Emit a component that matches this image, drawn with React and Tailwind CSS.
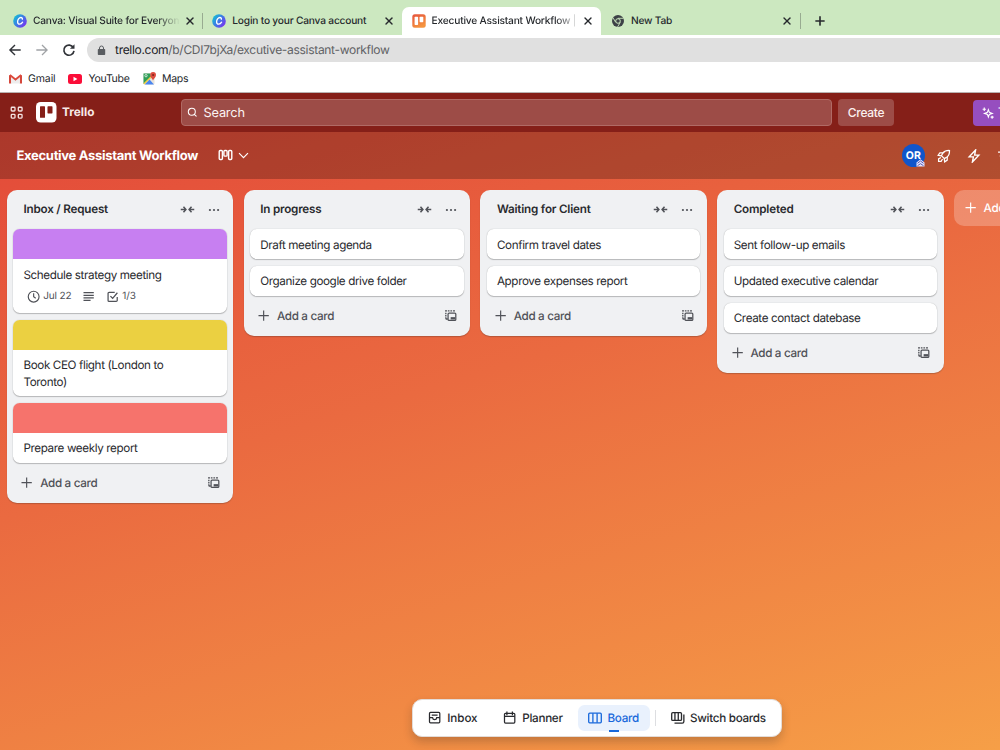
import { Search, X, Plus } from "lucide-react";
import clsx from "clsx";

const tabs = [
  { title: "Canva: Visual Suite for Everyon", icon: "canva", fade: true },
  { title: "Login to your Canva account", icon: "canva" },
  { title: "Executive Assistant Workflow |", icon: "trello", active: true, fade: true },
  { title: "New Tab", icon: "chrome" },
];

const lists = [
  {
    title: "Inbox / Request",
    cards: [
      { title: "Schedule strategy meeting", cover: "bg-[#c77ff1]", badges: true },
      { title: "Book CEO flight (London to Toronto)", cover: "bg-[#ebd041]" },
      { title: "Prepare weekly report", cover: "bg-[#f6736c]" },
    ],
  },
  {
    title: "In progress",
    cards: [{ title: "Draft meeting agenda" }, { title: "Organize google drive folder" }],
  },
  {
    title: "Waiting for Client",
    cards: [{ title: "Confirm travel dates" }, { title: "Approve expenses report" }],
  },
  {
    title: "Completed",
    cards: [
      { title: "Sent follow-up emails" },
      { title: "Updated executive calendar" },
      { title: "Create contact datebase" },
    ],
  },
];

/* ---------- Icons ---------- */

// Shared wrapper for the 16px outline icons
function Icon({ size = 13.3, children, className, stroke = 1.5 }) {
  return (
    <svg
      width={size}
      height={size}
      viewBox="0 0 16 16"
      fill="none"
      stroke="currentColor"
      strokeWidth={stroke}
      className={clsx("shrink-0", className)}
    >
      {children}
    </svg>
  );
}

function CanvaIcon() {
  return (
    <svg width="14" height="14" viewBox="0 0 14 14" className="shrink-0">
      <defs>
        <linearGradient id="canva" x1="0" y1="0.2" x2="0.9" y2="0.9">
          <stop offset="0" stopColor="#12c3d2" />
          <stop offset="0.5" stopColor="#3f78e6" />
          <stop offset="1" stopColor="#7b2ff0" />
        </linearGradient>
      </defs>
      <circle cx="7" cy="7" r="6.8" fill="url(#canva)" />
      <path
        d="M9.4 5.2c.1-1-.5-1.7-1.5-1.7C6.1 3.5 4.6 5.7 4.6 7.7c0 1.5.8 2.500 2.100 2.500 1.200 0 2.200-.8 2.900-2"
        fill="none"
        stroke="#fff"
        strokeWidth="1.300"
        strokeLinecap="round"
      />
    </svg>
  );
}

function TrelloTabIcon() {
  return (
    <svg width="14" height="14" viewBox="0 0 14 14" className="shrink-0">
      <defs>
        <linearGradient id="trelloTab" x1="0" y1="0" x2="0.5" y2="1">
          <stop offset="0" stopColor="#e5523c" />
          <stop offset="1" stopColor="#f5943f" />
        </linearGradient>
      </defs>
      <rect x="0.3" y="0.3" width="13.4" height="13.4" rx="2.5" fill="url(#trelloTab)" />
      <rect x="2.6" y="2.8" width="3.5" height="8.2" rx="0.7" fill="#fff" />
      <rect x="7.6" y="2.8" width="3.7" height="5.4" rx="0.7" fill="#fff" />
    </svg>
  );
}

function ChromeIcon() {
  return (
    <svg width="14" height="14" viewBox="0 0 14 14" className="shrink-0">
      <circle cx="7" cy="7" r="6" fill="#3c4146" />
      <circle cx="7" cy="7" r="2.3" fill="#3c4146" stroke="#cce8c0" strokeWidth="1" />
      <path d="M7 4.3h5.5M4.7 8.3 2 3.8M9.3 8.3l-2.7 4.6" stroke="#cce8c0" strokeWidth="0.9" />
    </svg>
  );
}

function TabIcon({ name }) {
  if (name === "canva") return <CanvaIcon />;
  if (name === "trello") return <TrelloTabIcon />;
  return <ChromeIcon />;
}

function GmailIcon() {
  return (
    <svg width="13" height="10" viewBox="0 0 13 10">
      <path d="M0 1v8.500h2.200V2z" fill="#d5483c" />
      <path d="M13 1v8.500h-2.200V2z" fill="#d5483c" />
      <path d="M2.200 2v7.500h8.600V2L6.500 5.500z" fill="#ededed" />
      <path d="M.9 1l5.600 4.500L12.100 1" fill="none" stroke="#dc4a3d" strokeWidth="1.8" />
    </svg>
  );
}

function MapsIcon() {
  return (
    <svg width="14" height="13" viewBox="0 0 14 13">
      <rect x="0.5" y="1" width="11" height="11.5" rx="1" fill="#e8e4dc" />
      <path d="M.5 1.500h6.800l.7 4L2 11.700H.5z" fill="#2f9e58" />
      <path d="M1.800 12.500 6.500 7.500l4.500 5z" fill="#4a86f0" />
      <path d="M.8 12 8 5" stroke="#f7cf45" strokeWidth="1.3" />
      <circle cx="3" cy="3.7" r="1.2" fill="none" stroke="#fff" strokeWidth="0.7" />
      <path d="M10 8.500C9.500 6.500 7.200 5.500 7.200 3a2.900 2.900 0 0 1 5.800 0c0 2.500-2.500 3.500-3 5.500z" fill="#dd4b3e" />
      <circle cx="10.1" cy="3" r="1" fill="#7d211b" />
    </svg>
  );
}

function LockIcon() {
  return (
    <svg width="9" height="11" viewBox="0 0 9 11">
      <rect x="0.8" y="4" width="7.4" height="6" rx="0.7" fill="#5a5d61" />
      <path d="M2.500 4.500V3a2 2 0 0 1 4 0v1.500" fill="none" stroke="#5a5d61" strokeWidth="1" />
    </svg>
  );
}

function CollapseIcon() {
  return (
    <Icon size={15} stroke={1.6}>
      <path d="M.8 8h5.200M3.700 5 6.300 8l-2.600 3M15.200 8H10M12.300 5 9.700 8l2.600 3" />
    </Icon>
  );
}

function MoreIcon() {
  return (
    <svg width="12" height="4" viewBox="0 0 12 4" fill="currentColor">
      <circle cx="1.9" cy="2" r="1.1" />
      <circle cx="6" cy="2" r="1.1" />
      <circle cx="10.1" cy="2" r="1.1" />
    </svg>
  );
}

function TemplateIcon() {
  return (
    <Icon size={13.3} stroke={1.5}>
      <rect x="4.9" y="4.9" width="9.3" height="8.8" rx="1.2" />
      <path d="M8 11.200h5.500" strokeWidth="2.800" />
      <path d="M2.200 11.700V10M2.200 9V7.300M2.200 6.300V4.600M2 3V2.200h1.700M4.700 2.200h1.900M7.700 2.200h1.900M10.700 2.200h2.500M2 12h2.500" strokeWidth="1.600" />
    </Icon>
  );
}

function PlusIcon({ size = 13.3 }) {
  return (
    <Icon size={size} stroke={1.4}>
      <path d="M8 1.800v12.400M1.800 8h12.400" />
    </Icon>
  );
}

/* ---------- Browser ---------- */

function TabStrip() {
  return (
    <div className="flex h-[35px] items-end bg-[#cce8c0] pl-[3.5px]">
      {tabs.map((tab, i) => (
        <div
          key={i}
          className={clsx(
            "relative flex h-[28px] w-[199.3px] items-center pr-[6px] pl-[9.5px] text-[#26292d]",
            tab.active && "rounded-t-[7px] bg-white"
          )}
        >
          <TabIcon name={tab.icon} />
          <span
            className={clsx(
              "ml-[6px] w-[147px] overflow-hidden pt-px text-[10.2px] font-medium tracking-[-0.2px] whitespace-nowrap",
              tab.fade && "[mask-image:linear-gradient(to_right,black_84%,transparent)]"
            )}
          >
            {tab.title}
          </span>
          <X className="ml-[3.5px] size-[12px] shrink-0" strokeWidth={2.8} />
          {(i === 0 || i === 3) && (
            <div className="absolute top-[6px] right-0 h-[16px] w-px bg-[#98ab91]" />
          )}
        </div>
      ))}
      <div className="flex h-[28px] items-center pl-[12px] text-[#26292d]">
        <Plus className="size-[14px]" strokeWidth={2.8} />
      </div>
    </div>
  );
}

function Toolbar() {
  return (
    <div className="flex h-[30px] items-center bg-white pl-[8px] text-[#303338]">
      <Icon size={14} stroke={1.6}>
        <path d="M14.500 8H2M8 2.200 2.200 8 8 13.800" />
      </Icon>
      <Icon size={14} stroke={1.5} className="ml-[12.5px] text-[#a0a3a6]">
        <path d="M1.500 8H14M8 2.200 13.800 8 8 13.800" />
      </Icon>
      <Icon size={14} stroke={1.9} className="ml-[13px]">
        <path d="M13 5.300A5.800 5.800 0 1 0 13.700 9" />
        <path d="M14.300 1.400v5.200H9.100z" fill="currentColor" stroke="none" />
      </Icon>
      <div className="ml-[11.5px] flex h-[24px] flex-1 items-center rounded-l-full bg-[#e0e0e0] pl-[10px]">
        <LockIcon />
        <span className="ml-[9px] text-[12px] tracking-[-0.3px] text-[#5f6164]">
          <span className="text-[#202226]">trello.com</span>
          /b/CDI7bjXa/excutive-assistant-workflow
        </span>
      </div>
    </div>
  );
}

function Bookmarks() {
  return (
    <div className="flex h-[28px] items-center border-b border-[#b9b2b0] bg-white pl-[8.5px] text-[10.5px] text-[#26292d]">
      <GmailIcon />
      <span className="ml-[6.5px] w-[40px] tracking-[-0.1px]">Gmail</span>
      <svg width="14" height="10" viewBox="0 0 14 10">
        <rect width="14" height="10" rx="2.5" fill="#fb0d38" />
        <path d="M5.500 2.800v4.400L9.400 5z" fill="#fff" />
      </svg>
      <span className="ml-[6.5px] w-[54px] tracking-[-0.3px]">YouTube</span>
      <MapsIcon />
      <span className="ml-[5.5px] tracking-[-0.3px]">Maps</span>
    </div>
  );
}

/* ---------- Trello ---------- */

function TrelloHeader() {
  return (
    <header className="flex h-[39px] shrink-0 items-center bg-[#851f18] pl-[10px] text-white">
      <Icon size={13.3} stroke={1.6} className="text-[#f4e3e1]">
        <rect x="1.500" y="1.500" width="4.500" height="4.500" rx="1" />
        <rect x="10" y="1.500" width="4.500" height="4.500" rx="1" />
        <rect x="1.500" y="10" width="4.500" height="4.500" rx="1" />
        <rect x="10" y="10" width="4.500" height="4.500" rx="1" />
      </Icon>
      <svg width="20.5" height="20.5" viewBox="0 0 20 20" className="ml-[13.2px]">
        <rect width="20" height="20" rx="4.500" fill="#fff" />
        <rect x="3.900" y="4.200" width="4.900" height="11.200" rx="0.600" fill="#851f18" />
        <rect x="11.200" y="4.200" width="4.900" height="7" rx="0.600" fill="#851f18" />
      </svg>
      <span className="ml-[5px] w-[119px] pt-px text-[11.8px] font-bold text-[#f8e9e7]">Trello</span>
      <div className="flex h-[27px] w-[651px] items-center rounded-[4px] border border-[#b06a65] bg-[#9d4c47] pl-[5.5px]">
        <Search className="size-[10.5px]" strokeWidth={2.4} />
        <span className="ml-[5.5px] pt-[2px] text-[12.8px] tracking-[-0.2px] text-[#fbf3f2]">Search</span>
      </div>
      <button className="ml-[6px] h-[27px] w-[56px] rounded-[4px] bg-[#9d4c47] text-[12px] font-medium tracking-[-0.3px] text-[#fbf0ef]">
        Create
      </button>
      <div className="ml-auto flex h-[26px] w-[27px] items-center overflow-hidden rounded-l-[4px] bg-[#964ebf] pl-[9px] text-[11.7px] font-medium whitespace-nowrap">
        <Icon size={12} stroke={1.5}>
          <path d="M8.500 3.500l1.300 3.700 3.700 1.300-3.700 1.300-1.300 3.700-1.300-3.700-3.700-1.300 3.700-1.300z" />
          <path d="M3 .8v4.400M.8 3h4.400M13.500 11.500v4M11.500 13.500h4" />
        </Icon>
        <span className="ml-[4px]">Try Premium</span>
      </div>
    </header>
  );
}

function BoardHeader() {
  return (
    <div className="flex h-[47.3px] shrink-0 items-center overflow-hidden bg-black/24 pl-[16.5px] text-white">
      <h1 className="w-[182px] pt-[1.5px] text-[13px] font-bold tracking-[-0.3px] whitespace-nowrap">
        Executive Assistant Workflow
      </h1>
      <Icon size={15} stroke={1.5} className="ml-[19px]">
        <rect x="1.300" y="2.700" width="3.400" height="9.600" rx="1" />
        <rect x="6.300" y="2.700" width="3.400" height="6" rx="1" />
        <rect x="11.300" y="2.700" width="3.400" height="9.600" rx="1" />
      </Icon>
      <Icon size={11} stroke={1.7} className="ml-[5.5px]">
        <path d="M1.500 4.500 8 11l6.500-6.500" />
      </Icon>
      <div className="relative ml-auto flex size-[23.3px] items-center justify-center rounded-full bg-[#1055cb] text-[10.5px] font-bold">
        OR
        <svg width="9" height="8" viewBox="0 0 9 8" className="absolute right-0 bottom-0">
          <path d="M.5 3.500 4.500.3l4 3.200v4h-8z" fill="#e4e5ff" />
          <path d="M1.500 4.300 4.500 2l3 2.300M1.500 6.700l3-2 3 2" fill="none" stroke="#4849a8" strokeWidth="0.9" />
        </svg>
      </div>
      <Icon size={14} stroke={1.400} className="ml-[11.5px]">
        <path d="M14.300 1.700c-3.300-.1-5.700.5-7.500 2.900L5 7.500 8.500 11l2.900-1.800c2.400-1.800 3-4.200 2.900-7.500z" />
        <path d="M7 4.300H3.300L1.300 7.200 4.800 7.800M11.700 9v3.700l-2.900 2-.5-3.500M4.500 9.800 1.800 11.300v2.900h2.900L6.300 11.500" />
      </Icon>
      <Icon size={14} stroke={1.6} className="ml-[16px]">
        <path d="M9.800 1.200 2.500 9h4.800l-1.100 5.800L13.500 7H8.700z" />
      </Icon>
      <Icon size={14} stroke={1.5} className="mr-[-9px] ml-[14.5px]">
        <path d="M3.500 3.500h12M5.500 8h8M7 12.500h4" />
      </Icon>
    </div>
  );
}

function Badges() {
  return (
    <div className="flex h-[20px] items-center pl-[3.5px] text-[10px] tracking-[-0.15px] text-[#505258]">
      <Icon size={13.3} stroke={1.4}>
        <circle cx="8" cy="8" r="6.500" />
        <path d="M8 4v4.200l2.500 1.800" />
      </Icon>
      <span className="ml-[3px] w-[39px]">Jul 22</span>
      <Icon size={13.3} stroke={1.5}>
        <path d="M1.800 3.300h12.400M1.800 6.400h12.400M1.800 9.500h12.400M1.800 12.600h8.500" />
      </Icon>
      <Icon size={13.3} stroke={1.5} className="ml-[10.5px]">
        <path d="M13.500 8.500v4a1.200 1.200 0 0 1-1.200 1.200H3.700a1.200 1.200 0 0 1-1.200-1.200V4a1.200 1.200 0 0 1 1.200-1.200H10.500" />
        <path d="M5.300 7.300 8 10 13.700 3.300" />
      </Icon>
      <span className="ml-[3px]">1/3</span>
    </div>
  );
}

function Card({ card }) {
  return (
    <div className="overflow-hidden rounded-[6.7px] bg-white shadow-[0_1px_1px_#1e1f2140,0_0_1px_#1e1f214f]">
      {card.cover && <div className={clsx("h-[30px]", card.cover)} />}
      <div className="px-[10px] pt-[7.3px] pb-[6px]">
        <p
          className={clsx(
            "w-[160px] text-[11.67px] leading-[16.67px] tracking-[-0.38px] text-[#292a2e]",
            card.badges && "mb-[3.5px]"
          )}
        >
          {card.title}
        </p>
        {card.badges && <Badges />}
      </div>
    </div>
  );
}

function List({ list }) {
  return (
    <section className="w-[226.67px] shrink-0 rounded-[10px] bg-[#f0f1f3] px-[6.67px] shadow-[0_1px_1px_#1e1f2140]">
      <div className="flex h-[39.6px] items-center pl-[10px] text-[#505258]">
        <h2 className="flex-1 pt-px text-[11.67px] font-semibold tracking-[-0.2px] text-[#292a2e]">
          {list.title}
        </h2>
        <CollapseIcon />
        <div className="mr-[7px] ml-[13px]">
          <MoreIcon />
        </div>
      </div>
      <div className="flex flex-col gap-[6.67px]">
        {list.cards.map((card) => (
          <Card key={card.title} card={card} />
        ))}
      </div>
      <div className="flex h-[40px] items-center pr-[6.5px] pl-[7px] text-[#505258]">
        <PlusIcon />
        <span className="ml-[6.5px] flex-1 pt-[2px] text-[11.67px] font-medium tracking-[-0.33px]">
          Add a card
        </span>
        <TemplateIcon />
      </div>
    </section>
  );
}

function BottomNav() {
  return (
    <nav className="absolute bottom-[13px] left-[412px] flex h-[38px] w-[369.5px] items-center rounded-[10px] border border-[#e3dcd8] bg-white pl-[5.5px] text-[11.67px] font-medium tracking-[-0.3px] text-[#292a2e] shadow-[0_5px_10px_#1e1f2138]">
      <div className="flex w-[75px] items-center pl-[9px]">
        <Icon>
          <rect x="1.800" y="1.800" width="12.400" height="12.400" rx="1.200" />
          <path d="M4.500 5h7M1.800 8h3.700c.2 1.700 1 2.500 2.500 2.500s2.300-.8 2.500-2.500h3.700" />
        </Icon>
        <span className="ml-[6.5px] pt-px tracking-[-0.1px]">Inbox</span>
      </div>
      <div className="flex w-[84px] items-center pl-[9px]">
        <Icon>
          <rect x="1.800" y="2.800" width="12.400" height="11.700" rx="1.200" />
          <path d="M4.700.5v4.500M11.300.5v4.500M1.800 6.500h12.400" />
        </Icon>
        <span className="ml-[6.5px] pt-px">Planner</span>
      </div>
      <div className="relative flex h-[26.5px] w-[72px] items-center rounded-[6.5px] bg-[#e9f1fd] pl-[10px] text-[#1868db]">
        <Icon size={14}>
          <rect x="0.800" y="2.500" width="14.400" height="11" rx="1.200" />
          <path d="M5.600 2.500v11M10.400 2.500v11" />
        </Icon>
        <span className="ml-[6px] pt-px">Board</span>
        <div className="absolute -bottom-[0.5px] left-[31px] h-[2px] w-[10px] bg-[#1868db]" />
      </div>
      <div className="ml-[5px] h-[16px] w-px bg-[#dddee1]" />
      <div className="flex items-center pl-[15px]">
        <Icon size={14}>
          <rect x="0.800" y="1.800" width="11.200" height="9" rx="1.200" />
          <path d="M4.500 1.800v9M8.300 1.800v9M14.700 4v8a1.800 1.800 0 0 1-1.800 1.800H4" />
        </Icon>
        <span className="ml-[5.5px] pt-px whitespace-nowrap">Switch boards</span>
      </div>
    </nav>
  );
}

export default function App() {
  return (
    <div className="relative flex h-[750px] w-[1000px] flex-col overflow-hidden bg-white font-[Inter,sans-serif] [text-rendering:geometricPrecision]">
      <TabStrip />
      <Toolbar />
      <Bookmarks />
      <TrelloHeader />
      <main className="flex flex-1 flex-col bg-[linear-gradient(163deg,#e34a39_0%,#ea6a40_42%,#f69f47_100%)]">
        <BoardHeader />
        <div className="flex items-start gap-[10.1px] pt-[10.6px] pl-[6.8px]">
          {lists.map((list) => (
            <List key={list.title} list={list} />
          ))}
          <div className="flex h-[36.5px] w-[227px] shrink-0 items-center rounded-[10px] bg-white/24 pl-[10px] text-[11.67px] font-medium tracking-[-0.2px] text-white">
            <PlusIcon />
            <span className="ml-[6.5px] pt-px">Add another list</span>
          </div>
        </div>
      </main>
      <BottomNav />
    </div>
  );
}
